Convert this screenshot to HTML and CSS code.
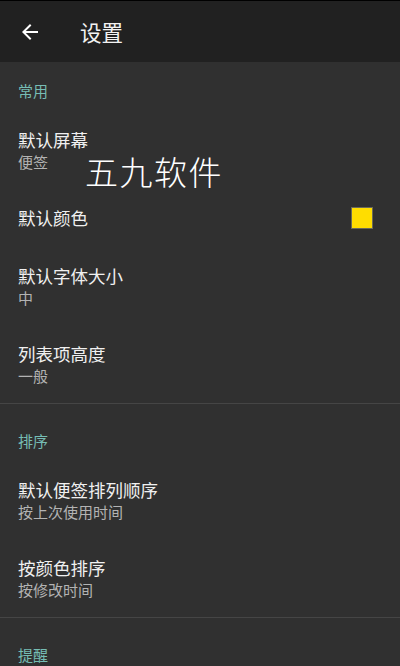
FILE: index.html
```html
<!DOCTYPE html>
<html lang="zh">
<head>
<meta charset="utf-8">
<link rel="stylesheet" href="styles.css">
</head>
<body>
<div class="app">
  <header class="toolbar">
    <svg class="back" width="24" height="24" viewBox="0 0 24 24"><path d="M20 11H7.83l5.59-5.59L12 4l-8 8 8 8 1.41-1.41L7.83 13H20v-2z" fill="#fff"/></svg>
    <h1 class="title">设置</h1>
  </header>
  <main class="list">
    <div class="category first">常用</div>
    <div class="item two"><div class="t">默认屏幕</div><div class="s">便签</div></div>
    <div class="item one"><div class="t">默认颜色</div><span class="swatch"></span></div>
    <div class="item two"><div class="t">默认字体大小</div><div class="s">中</div></div>
    <div class="item two"><div class="t">列表项高度</div><div class="s">一般</div></div>
    <div class="divider"></div>
    <div class="category">排序</div>
    <div class="item two"><div class="t">默认便签排列顺序</div><div class="s">按上次使用时间</div></div>
    <div class="item two"><div class="t">按颜色排序</div><div class="s">按修改时间</div></div>
    <div class="divider"></div>
    <div class="category">提醒</div>
  </main>
  <div class="watermark">五九软件</div>
</div>
</body>
</html>
```
FILE: styles.css
```css
html, body { margin: 0; padding: 0; }
body {
  background: #303030;
  font-family: "Noto Sans CJK SC", "Noto Sans", sans-serif;
  color: #fff;
  width: 400px;
  height: 666px;
  overflow: hidden;
}
.app { position: relative; height: 666px; }
.toolbar {
  border-top: 1px solid #000;
  background: #212121;
  display: flex;
  align-items: center;
  box-sizing: border-box;
  height: 62px;
  padding-left: 18px;
}
.back { width: 24px; height: 24px; margin-right: 38px; }
.title {
  margin: 0;
  font-size: 21.5px;
  font-weight: 400;
  line-height: 24px;
  color: #f2f2f2;
}
.list { display: flex; flex-direction: column; }
.category {
  padding: 19px 18px 10px;
  font-size: 15px;
  line-height: 20px;
  color: #76bdb4;
}
.item {
  display: flex;
  flex-direction: column;
  justify-content: center;
  padding: 0 27px 0 18px;
  position: relative;
}
.item.two { height: 78px; }
.item.one { height: 58px; flex-direction: row; align-items: center; justify-content: space-between; }
.t { font-size: 17.5px; line-height: 22px; color: #f0f0f0; }
.s { font-size: 15px; line-height: 21px; color: #b3b3b3; }
.swatch {
  width: 20px; height: 20px;
  background: #ffdd00;
  border: 1px solid #6a6a5a;
}
.divider { height: 1px; background: #454545; margin-bottom: 8px; }
.watermark {
  position: absolute;
  left: 85px;
  top: 147px;
  font-size: 33px;
  font-weight: 200;
  letter-spacing: 1.5px;
  color: #fff;
}
```
